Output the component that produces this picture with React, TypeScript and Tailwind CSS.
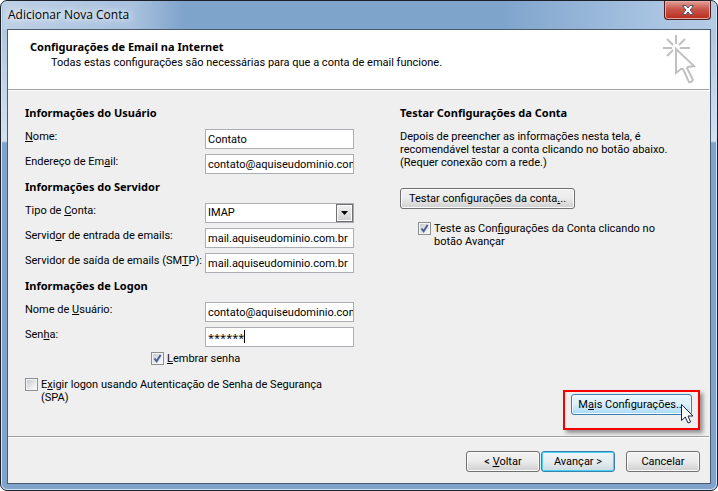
import React, { useState } from 'react';
import { clsx } from 'clsx';

const fieldClass =
  'block w-full h-5 border border-[#abadb3] bg-white pl-0.5 text-[11px] leading-4 text-black outline-none rounded-none';

const headingClass = "font-['Noto_Sans',sans-serif] text-[11px] leading-4 font-bold";

interface FieldProps {
  id: string;
  label: React.ReactNode;
  children: React.ReactNode;
}

function Field({ id, label, children }: FieldProps) {
  return (
    <div className="grid grid-cols-[180px_1fr]">
      <label htmlFor={id} className="h-4 leading-4 whitespace-nowrap">
        {label}
      </label>
      <div className="relative">{children}</div>
    </div>
  );
}

function Section({ title, children }: { title: React.ReactNode; children: React.ReactNode }) {
  return (
    <section>
      <h2 className={clsx(headingClass, 'mb-2')}>{title}</h2>
      <div className="flex flex-col gap-[5px]">{children}</div>
    </section>
  );
}

interface CheckProps {
  defaultChecked?: boolean;
  className?: string;
  children: React.ReactNode;
}

function Check({ defaultChecked = false, className, children }: CheckProps) {
  const [checked, setChecked] = useState(defaultChecked);

  return (
    <label className={clsx('flex items-start gap-[3px] leading-[13px]', className)}>
      <span className="relative block h-[13px] w-[13px] shrink-0">
        <input
          type="checkbox"
          checked={checked}
          onChange={(e) => setChecked(e.target.checked)}
          className="block h-[13px] w-[13px] appearance-none border border-[#8e8f8f] bg-linear-to-br from-[#c3c8ce] to-white shadow-[inset_0_0_0_1px_#f4f4f4]"
        />
        {checked && (
          <svg viewBox="0 0 13 13" className="pointer-events-none absolute inset-0 h-[13px] w-[13px]">
            <path d="M3.5 6.5 L5.6 9.3 L9.6 3" fill="none" stroke="#4a5f97" strokeWidth="2" />
          </svg>
        )}
      </span>
      <span>{children}</span>
    </label>
  );
}

interface DialogButtonProps {
  tone?: 'normal' | 'default' | 'hover';
  className?: string;
  children: React.ReactNode;
}

function DialogButton({ tone = 'normal', className, children }: DialogButtonProps) {
  const tones = {
    normal:
      'border-[#707070] from-[#f2f2f2] from-0% via-[#ebebeb] via-49% to-[#cfcfcf] shadow-[inset_0_0_0_1px_#fbfbfb]',
    default:
      'border-[#3c7fb1] from-[#f0f4f6] from-0% via-[#e5edf1] via-49% to-[#cddae1] shadow-[inset_0_0_0_1px_#42d3f7]',
    hover:
      'border-[#3c7fb1] from-[#eaf6fd] from-0% via-[#d9f0fc] via-49% to-[#a7d9f5] shadow-[inset_0_0_0_1px_#f2faff]',
  };

  return (
    <button
      type="button"
      className={clsx(
        'h-[21px] rounded-[3px] border bg-linear-to-b text-center text-[11px] leading-4 whitespace-nowrap text-black',
        tones[tone],
        className,
      )}
    >
      {children}
    </button>
  );
}

function WizardIcon() {
  return (
    <svg viewBox="0 0 38 56" className="h-14 w-[38px]" fill="none" stroke="#c0c0c0" strokeWidth="2">
      <path d="M16 5 V14 M3 18 H12 M20 18 H30 M7 9 L13 15 M25 9 L19 15 M7 26 L13 20" />
      <path d="M16 19 V43 L21 39 L23 39 L29 52 Q31 53 33 50 L27 38 L28 37 L34 36 Z" />
    </svg>
  );
}

function Pointer({ className }: { className: string }) {
  return (
    <svg viewBox="0 0 13 20" className={className}>
      <path
        d="M0.5 0.5 V16.5 L4.3 13 L7 19 L9.6 18 L7 12 H12 Z"
        fill="#fff"
        stroke="#1b2440"
        strokeLinejoin="round"
      />
    </svg>
  );
}

export default function App() {
  const [name, setName] = useState('Contato');
  const [email, setEmail] = useState('contato@aquiseudominio.com.br');
  const [incoming, setIncoming] = useState('mail.aquiseudominio.com.br');
  const [outgoing, setOutgoing] = useState('mail.aquiseudominio.com.br');
  const [user, setUser] = useState('contato@aquiseudominio.com.br');

  return (
    <div className="flex min-h-screen flex-col bg-white font-[Roboto,sans-serif] text-[11px] text-black">
      <div className="flex flex-1 flex-col rounded-[7px] border border-[#1c2029] bg-[linear-gradient(to_bottom,#a9c3df_0,#b0c7e1_30px,#d3e1f0_140px,#7fa3cb_142px,#7fa3cb_100%)] px-1.5 pb-1.5 shadow-[inset_0_0_0_1px_#d3e6f7]">
        {/* Title bar */}
        <header className="-mx-1 flex h-7 items-start justify-between rounded-t-[5px] bg-[linear-gradient(to_right,#bdd0e6_0,#a9c2df_130px,#7fa4cc_180px,#7fa4cc_70%,#a9c4e2_92%,#b4cbe5_100%)] pr-1 pl-[5px]">
          <h1 className="pt-1.5 font-['Open_Sans',sans-serif] text-[12px] leading-4 [text-shadow:0_0_6px_#fff,0_0_10px_#fff]">
            Adicionar Nova Conta
          </h1>
          <button
            type="button"
            aria-label="Fechar"
            className="flex h-[19px] w-[47px] items-center justify-center rounded-b-[4px] border border-t-0 border-[#4c1c20] bg-linear-to-b from-[#e0a199] from-0% via-[#c9554a] via-45% to-[#b8291a] shadow-[inset_0_0_0_1px_#e8a9a0]"
          >
            <svg viewBox="0 0 14 12" className="h-3 w-3.5">
              <path
                d="M1.5 1.5 H5 L7 4 L9 1.5 H12.5 L9.2 6 L12.5 10.5 H9 L7 8 L5 10.5 H1.5 L4.8 6 Z"
                fill="#fff"
                stroke="#535666"
              />
            </svg>
          </button>
        </header>

        <main className="flex flex-1 flex-col border border-[#4b5a6c] bg-[#efefef]">
          {/* Wizard heading */}
          <div className="mr-px flex h-[60px] items-start justify-between border-b border-[#a0a0a0] bg-white pr-[11px] pl-[22px]">
            <div className="pt-[9px]">
              <h2 className={headingClass}>Configurações de Email na Internet</h2>
              <p className="pl-[21px] leading-4">
                Todas estas configurações são necessárias para que a conta de email funcione.
              </p>
            </div>
            <WizardIcon />
          </div>

          <form className="flex flex-1 gap-[46px] border-t border-white pt-[14px] pr-2.5 pb-1.5 pl-[17px]">
            <div className="flex w-[329px] shrink-0 flex-col gap-[5px]">
              <Section title="Informações do Usuário">
                <Field id="nome" label={<><u>N</u>ome:</>}>
                  <input id="nome" value={name} onChange={(e) => setName(e.target.value)} className={fieldClass} />
                </Field>
                <Field id="email" label={<>Endereço de Em<u>a</u>il:</>}>
                  <input id="email" value={email} onChange={(e) => setEmail(e.target.value)} className={fieldClass} />
                </Field>
              </Section>

              <Section title="Informações do Servidor">
                <Field id="tipo" label={<>Tipo de <u>C</u>onta:</>}>
                  <select id="tipo" defaultValue="IMAP" className={clsx(fieldClass, 'appearance-none')}>
                    <option>IMAP</option>
                    <option>POP3</option>
                  </select>
                  <span className="pointer-events-none absolute top-px right-px flex h-[18px] w-[17px] items-center justify-center border border-[#707070] bg-linear-to-b from-[#f2f2f2] to-[#cfcfcf] shadow-[inset_0_0_0_1px_#fbfbfb]">
                    <svg viewBox="0 0 7 4" className="h-1 w-[7px]">
                      <path d="M0 0 H7 L3.5 4 Z" />
                    </svg>
                  </span>
                </Field>
                <Field id="entrada" label={<>Servid<u>o</u>r de entrada de emails:</>}>
                  <input id="entrada" value={incoming} onChange={(e) => setIncoming(e.target.value)} className={fieldClass} />
                </Field>
                <Field id="saida" label={<>Servidor de saída de emails (SM<u>T</u>P):</>}>
                  <input id="saida" value={outgoing} onChange={(e) => setOutgoing(e.target.value)} className={fieldClass} />
                </Field>
              </Section>

              <Section title="Informações de Logon">
                <Field id="usuario" label={<>Nome de <u>U</u>suário:</>}>
                  <input id="usuario" value={user} onChange={(e) => setUser(e.target.value)} className={fieldClass} />
                </Field>
                <Field id="senha" label={<>Sen<u>h</u>a:</>}>
                  <input
                    id="senha"
                    defaultValue="******"
                    className={clsx(fieldClass, "font-['Noto_Sans',sans-serif]")}
                  />
                  <span className="pointer-events-none absolute top-[3px] left-[39px] h-[13px] w-px bg-black" />
                </Field>
              </Section>

              <Check defaultChecked className="ml-[126px]">
                <u>L</u>embrar senha
              </Check>
              <Check className="mt-2 max-w-[310px]">
                E<u>x</u>igir logon usando Autenticação de Senha de Segurança (SPA)
              </Check>
            </div>

            <div className="flex flex-1 flex-col items-start">
              <h2 className={clsx(headingClass, 'mb-[9px]')}>Testar Configurações da Conta</h2>
              <p className="leading-[13px]">
                Depois de preencher as informações nesta tela, é
                <br />
                recomendável testar a conta clicando no botão abaixo.
                <br />
                (Requer conexão com a rede.)
              </p>
              <DialogButton className="mt-[19px] w-[175px]">
                Testar configurações da conta<u>.</u>..
              </DialogButton>
              <Check defaultChecked className="mt-[13px] ml-[18px] max-w-[250px]">
                Teste as Con<u>f</u>igurações da Conta clicando no botão Avançar
              </Check>

              {/* Highlighted action */}
              <div className="relative mt-auto self-end border-2 border-[#f80000] px-1.5 pt-0.5 pb-[13px] shadow-[3px_3px_4px_#00000066]">
                <DialogButton tone="hover" className="w-[121px]">
                  M<u>a</u>is Configurações...
                </DialogButton>
                <Pointer className="absolute top-3 right-1 h-5 w-[13px]" />
              </div>
            </div>
          </form>

          <footer className="mr-px flex border-t border-[#a0a0a0]">
            <div className="flex flex-1 justify-end border-t border-white pt-[13px] pr-[9px] pb-[11px]">
              <DialogButton className="w-[74px]">
                &lt; <u>V</u>oltar
              </DialogButton>
              <DialogButton tone="default" className="ml-px w-[74px]">
                Avançar &gt;
              </DialogButton>
              <DialogButton className="ml-[11px] w-[74px]">Cancelar</DialogButton>
            </div>
          </footer>
        </main>
      </div>
    </div>
  );
}
